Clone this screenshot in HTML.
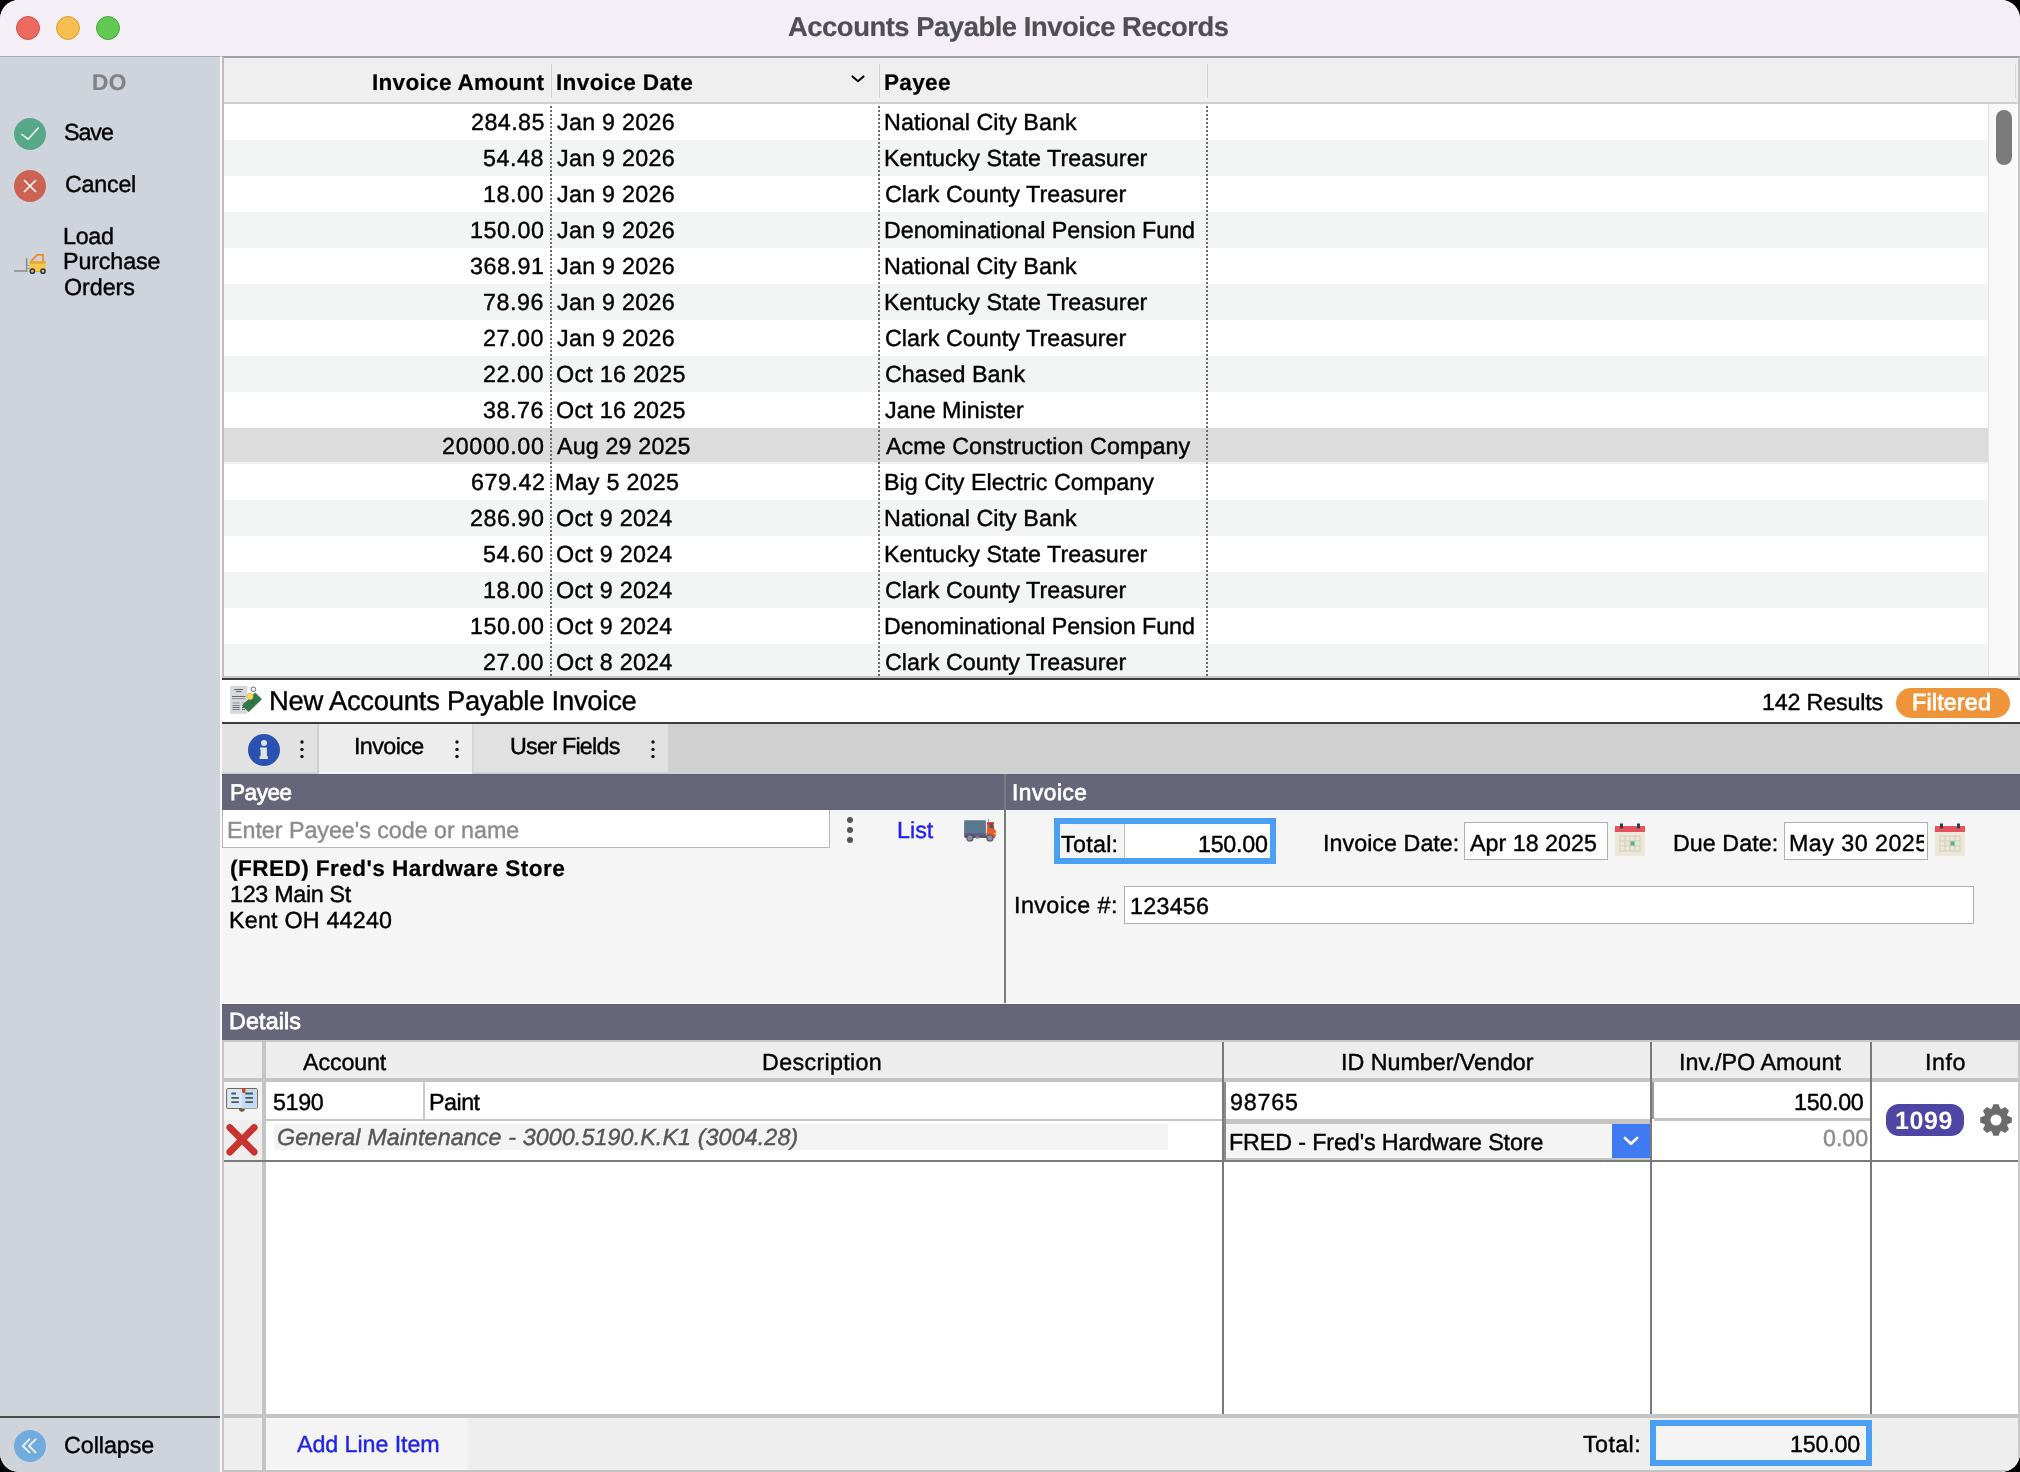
<!DOCTYPE html>
<html><head><meta charset="utf-8">
<style>
*{box-sizing:border-box;margin:0;padding:0}
html,body{width:2020px;height:1472px;overflow:hidden;background:#000}
body{position:relative;font-family:"Liberation Sans",sans-serif;font-size:22px;color:#000;letter-spacing:0.5px}
.a{position:absolute}
.t{position:absolute;white-space:pre;text-rendering:geometricPrecision;will-change:transform;-webkit-text-stroke:0.4px}
.r{text-align:right}
.c{text-align:center}
.b{font-weight:bold}
.n{letter-spacing:1px}
.d{letter-spacing:0.8px}
#win{position:absolute;left:0;top:0;width:2020px;height:1472px;border-radius:19px;overflow:hidden;background:#f5f5f5}
.dotv{position:absolute;width:2px;background-image:linear-gradient(to bottom,#6a6a6a 50%,transparent 50%);background-size:2px 4px}
.sect{position:absolute;height:37px;background:#676579;border-top:1px solid #5e5c70}
.sect .t{color:#fff;font-weight:bold;letter-spacing:0}
.kb{position:absolute;width:4px;height:4px;border-radius:50%;background:#222}
</style></head><body>
<div id="win">
<!-- title bar -->
<div class="a" style="left:0;top:0;width:2020px;height:56px;background:#f4eff6"></div>
<div class="a" style="left:0;top:56px;width:220px;height:1px;background:#a5abb5"></div><div class="a" style="left:222px;top:56px;width:1798px;height:2px;background:#a0a0a0"></div><div class="a" style="left:220px;top:56px;width:2px;height:1px;background:#d8d8d8"></div>
<div class="a" style="left:16px;top:16px;width:24px;height:24px;border-radius:50%;background:#ed6a5e;border:1px solid #d4514a"></div>
<div class="a" style="left:56px;top:16px;width:24px;height:24px;border-radius:50%;background:#f4be50;border:1px solid #d9a03a"></div>
<div class="a" style="left:96px;top:16px;width:24px;height:24px;border-radius:50%;background:#62c854;border:1px solid #48a63c"></div>

<!-- sidebar -->
<div class="a" style="left:0;top:57px;width:220px;height:1415px;background:#cfd3dc"></div>
<div class="a" style="left:220px;top:57px;width:2px;height:1415px;background:#f7f7f7"></div>
<svg class="a" style="left:14px;top:118px" width="32" height="32" viewBox="0 0 32 32"><circle cx="16" cy="16" r="16" fill="#57a888"/><path d="M7.3 16 L14.1 21.2 L24.7 9.4" fill="none" stroke="#fff" stroke-width="1.5"/></svg>
<svg class="a" style="left:14px;top:170px" width="32" height="32" viewBox="0 0 32 32"><circle cx="16" cy="16" r="16" fill="#cc6352"/><path d="M10 10 L22 22 M22 10 L10 22" fill="none" stroke="#fff" stroke-width="1.6"/></svg>
<svg class="a" style="left:10px;top:248px" width="40" height="30" viewBox="0 0 40 30"><rect x="4" y="22.2" width="13" height="1.6" fill="#8f8c85"/><rect x="15.9" y="10.2" width="1.6" height="13.6" fill="#8f8c85"/><rect x="17.5" y="17.1" width="2.5" height="0.9" fill="#9a978f"/><rect x="17.5" y="20" width="2.5" height="0.9" fill="#9a978f"/><rect x="19.6" y="13.2" width="16" height="10.4" fill="#f5c848"/><rect x="19.6" y="13.2" width="16" height="2.6" fill="#eba33a"/><rect x="19.6" y="23" width="16" height="0.9" fill="#f0a030"/><path d="M21 13.2 L27.3 6.9 L33 6.9 L33 13.2" fill="none" stroke="#ec8a2c" stroke-width="1.8"/><circle cx="22.4" cy="23.2" r="2.1" fill="#f5b93a" stroke="#1f3a5f" stroke-width="1.5"/><circle cx="33" cy="23.2" r="2.1" fill="#f5b93a" stroke="#1f3a5f" stroke-width="1.5"/></svg>
<div class="a" style="left:0;top:1416px;width:220px;height:2px;background:#4a4a4a"></div>
<svg class="a" style="left:14px;top:1430px" width="32" height="32" viewBox="0 0 32 32"><circle cx="16" cy="16" r="16" fill="#6fabdd"/><path d="M15.9 8.8 L8.8 15.9 L15.9 23 M22.1 8.8 L15 15.9 L22.1 23" fill="none" stroke="#fff" stroke-width="1.7"/></svg>

<!-- list table -->
<div class="a" style="left:222px;top:57px;width:2px;height:621px;background:#bdbdbd"></div>
<div class="a" style="left:224px;top:58px;width:1794px;height:44px;background:#efefef"></div>
<div class="a" style="left:224px;top:102px;width:1796px;height:2px;background:#cfcfcf"></div>
<div class="a" style="left:2018px;top:57px;width:2px;height:621px;background:#c4c4c4"></div>
<div class="a" style="left:551px;top:64px;width:1px;height:34px;background:#cfcfcf"></div>
<div class="a" style="left:879px;top:64px;width:1px;height:34px;background:#cfcfcf"></div>
<div class="a" style="left:1207px;top:64px;width:1px;height:34px;background:#cfcfcf"></div>
<div class="a" style="left:2015px;top:64px;width:1px;height:34px;background:#d6d6d6"></div>
<svg class="a" style="left:851px;top:74px" width="14" height="10" viewBox="0 0 14 10"><path d="M1.5 2.4 L7 7.2 L12.5 2.4" fill="none" stroke="#000" stroke-width="2" stroke-linecap="round" stroke-linejoin="round"/></svg>
<div class="a" style="left:224px;top:104px;width:1764px;height:36px;background:#ffffff"></div>
<div class="a" style="left:224px;top:140px;width:1764px;height:36px;background:#f3f4f4"></div>
<div class="a" style="left:224px;top:176px;width:1764px;height:36px;background:#ffffff"></div>
<div class="a" style="left:224px;top:212px;width:1764px;height:36px;background:#f3f4f4"></div>
<div class="a" style="left:224px;top:248px;width:1764px;height:36px;background:#ffffff"></div>
<div class="a" style="left:224px;top:284px;width:1764px;height:36px;background:#f3f4f4"></div>
<div class="a" style="left:224px;top:320px;width:1764px;height:36px;background:#ffffff"></div>
<div class="a" style="left:224px;top:356px;width:1764px;height:36px;background:#f3f4f4"></div>
<div class="a" style="left:224px;top:392px;width:1764px;height:36px;background:#ffffff"></div>
<div class="a" style="left:224px;top:428px;width:1764px;height:34px;background:#dcdcdc"></div><div class="a" style="left:224px;top:462px;width:1764px;height:2px;background:#f0f0f0"></div>
<div class="a" style="left:224px;top:464px;width:1764px;height:36px;background:#ffffff"></div>
<div class="a" style="left:224px;top:500px;width:1764px;height:36px;background:#f3f4f4"></div>
<div class="a" style="left:224px;top:536px;width:1764px;height:36px;background:#ffffff"></div>
<div class="a" style="left:224px;top:572px;width:1764px;height:36px;background:#f3f4f4"></div>
<div class="a" style="left:224px;top:608px;width:1764px;height:36px;background:#ffffff"></div>
<div class="a" style="left:224px;top:644px;width:1764px;height:32px;background:#f3f4f4"></div>
<div class="dotv" style="left:550px;top:106px;height:570px"></div>
<div class="dotv" style="left:878px;top:106px;height:570px"></div>
<div class="dotv" style="left:1206px;top:106px;height:570px"></div>
<div class="a" style="left:1988px;top:104px;width:30px;height:572px;background:#f9f9f9;border-left:1px solid #e2e2e2"></div>
<div class="a" style="left:1996px;top:110px;width:16px;height:55px;border-radius:8px;background:#7b7b7b"></div>
<div class="a" style="left:224px;top:676px;width:1796px;height:2px;background:#c8c8c8"></div>
<div class="a" style="left:222px;top:678px;width:1798px;height:2px;background:#3c3c3c"></div>

<!-- new invoice bar -->
<div class="a" style="left:222px;top:680px;width:1798px;height:42px;background:#fff"></div>
<svg class="a" style="left:226px;top:682px" width="40" height="36" viewBox="0 0 40 36"><rect x="4.2" y="3.9" width="17.1" height="27.9" fill="#d6d7d8"/><g fill="#555b66"><rect x="8.3" y="7" width="8.6" height="1"/><rect x="10.2" y="9.1" width="5.3" height="0.9"/><rect x="6" y="14" width="13.4" height="0.9"/><rect x="6" y="16.2" width="13.4" height="0.9" opacity="0.6"/><rect x="6.5" y="20.5" width="7.2" height="0.9" opacity="0.6"/><rect x="6.5" y="23" width="7.2" height="0.9" opacity="0.8"/><rect x="6.5" y="25" width="7.2" height="0.9"/><rect x="6.5" y="27.1" width="7.2" height="0.9" opacity="0.8"/><rect x="16" y="20.5" width="3" height="0.9" opacity="0.6"/><rect x="16" y="25" width="3" height="0.9"/><rect x="16" y="27.1" width="3" height="0.9"/></g><path d="M16.3 23.5 L29.3 10.9 L35.6 17.2 L22.6 29.8 Z" fill="#2f7a47" stroke="#1f5f35" stroke-width="0.6"/><ellipse cx="26.3" cy="20.6" rx="1.3" ry="1.8" fill="#276a3c" transform="rotate(-40 26.3 20.6)"/><circle cx="24" cy="14.4" r="3.1" fill="#f6dd5c" stroke="#efad4a" stroke-width="0.7"/><circle cx="27.4" cy="7.3" r="2.3" fill="none" stroke="#555b66" stroke-width="0.9"/></svg>
<div class="a" style="left:1896px;top:688px;width:114px;height:30px;border-radius:15px;background:#f0943a"></div>
<div class="a" style="left:222px;top:722px;width:1798px;height:2px;background:#3c3c3c"></div>

<!-- tabs -->
<div class="a" style="left:222px;top:724px;width:1798px;height:50px;background:#d0d0d0"></div>
<div class="a" style="left:668px;top:773px;width:1352px;height:1px;background:#d7d7d6"></div>
<div class="a" style="left:222px;top:724px;width:95px;height:48px;background:#e2e2e2"></div>
<div class="a" style="left:222px;top:772px;width:95px;height:2px;background:#d4d4d4"></div>
<div class="a" style="left:317px;top:724px;width:2px;height:50px;background:#cdcdcd"></div>
<div class="a" style="left:319px;top:724px;width:153px;height:48px;background:#ededed"></div>
<div class="a" style="left:319px;top:772px;width:153px;height:2px;background:#f4f4f4"></div>
<div class="a" style="left:472px;top:724px;width:2px;height:48px;background:#d5d5d5"></div>
<div class="a" style="left:474px;top:724px;width:194px;height:48px;background:#e1e1e1"></div>
<svg class="a" style="left:248px;top:734px" width="32" height="32" viewBox="0 0 32 32"><circle cx="16" cy="16" r="16" fill="#2a53b1"/><circle cx="16" cy="9" r="3" fill="#e2e2e2"/><path d="M12 13.6 H18.9 V22.2 H19.9 V24.9 H11.6 V22.2 H12.6 V15.6 H12 Z" fill="#e2e2e2"/></svg>
<svg class="a" style="left:298px;top:736px" width="8" height="26" viewBox="0 0 8 26"><circle cx="4" cy="6" r="1.7" fill="#111"/><circle cx="4" cy="13.4" r="1.7" fill="#111"/><circle cx="4" cy="20.5" r="1.7" fill="#111"/></svg>
<svg class="a" style="left:453px;top:736px" width="8" height="26" viewBox="0 0 8 26"><circle cx="4" cy="6" r="1.7" fill="#111"/><circle cx="4" cy="13.4" r="1.7" fill="#111"/><circle cx="4" cy="20.5" r="1.7" fill="#111"/></svg>
<svg class="a" style="left:649px;top:736px" width="8" height="26" viewBox="0 0 8 26"><circle cx="4" cy="6" r="1.7" fill="#111"/><circle cx="4" cy="13.4" r="1.7" fill="#111"/><circle cx="4" cy="20.5" r="1.7" fill="#111"/></svg>

<!-- section headers -->
<div class="sect" style="left:222px;top:774px;width:782px;height:36px"></div>
<div class="sect" style="left:1006px;top:774px;width:1014px;height:36px"></div>
<div class="a" style="left:1004px;top:774px;width:2px;height:230px;background:#7a7a7a"></div>
<div class="a" style="left:222px;top:1003px;width:1798px;height:1px;background:#fff"></div>

<!-- payee panel -->
<div class="a" style="left:222px;top:810px;width:608px;height:38px;background:#fff;border:1px solid #b8b8b8;border-top:none"></div>
<div class="a" style="left:847px;top:817px;width:6px;height:6px;border-radius:50%;background:#555"></div>
<div class="a" style="left:847px;top:827px;width:6px;height:6px;border-radius:50%;background:#555"></div>
<div class="a" style="left:847px;top:837px;width:6px;height:6px;border-radius:50%;background:#555"></div>
<svg class="a" style="left:958px;top:812px" width="44" height="36" viewBox="0 0 44 36"><rect x="6.1" y="8.3" width="21.8" height="14" rx="1" fill="#5b788e"/><rect x="6.1" y="21.2" width="22.5" height="4.2" fill="#5e6080"/><rect x="7" y="24.3" width="30" height="1.5" fill="#4e4a60"/><path d="M28.9 10.3 H35.5 L36.2 16.8 L37.9 18.8 V24.4 H28.9 Z" fill="#ee5c2a"/><rect x="28.9" y="10.3" width="7" height="1.8" fill="#d3322c"/><path d="M31.3 12.1 H35 L35.9 16.8 L31.3 15.8 Z" fill="#545470"/><rect x="30" y="7" width="1" height="3.3" fill="#9aa0a8"/><circle cx="36.8" cy="21.6" r="0.9" fill="#f7d44a"/><rect x="17.4" y="24.6" width="4.2" height="2.2" rx="1" fill="#8e8c9a"/><circle cx="12" cy="25.9" r="3.1" fill="#908da0" stroke="#4e4a60" stroke-width="1.1"/><circle cx="32" cy="25.9" r="3.1" fill="#908da0" stroke="#4e4a60" stroke-width="1.1"/></svg>

<!-- invoice panel -->
<div class="a" style="left:1054px;top:818px;width:222px;height:46px;border:6px solid #4aa0f5;background:#f5f5f5"></div>
<div class="a" style="left:1124px;top:824px;width:146px;height:34px;background:#fff;border-left:1px solid #bdbdbd"></div>
<div class="a" style="left:1464px;top:822px;width:144px;height:38px;background:#fff;border:1px solid #b0b0b0"></div>
<div class="a" style="left:1784px;top:822px;width:144px;height:38px;background:#fff;border:1px solid #b0b0b0;overflow:hidden"></div>
<svg class="a cal" style="left:1614px;top:823px" width="32" height="34" viewBox="0 0 32 34"><rect x="1" y="3" width="30" height="30" fill="#ebe8d9"/><rect x="1" y="3" width="30" height="6" fill="#e5525b"/><rect x="6" y="0.5" width="3" height="5" fill="#2e3e52"/><rect x="23" y="0.5" width="3" height="5" fill="#2e3e52"/><g fill="none" stroke="#d2cdb5" stroke-width="1"><rect x="6" y="13" width="20" height="15"/><path d="M11 13 V28 M16 13 V28 M21 13 V28 M6 18 H26 M6 23 H26"/></g><rect x="16.5" y="18.5" width="4" height="4" fill="#4fb39a"/></svg>
<svg class="a cal" style="left:1934px;top:823px" width="32" height="34" viewBox="0 0 32 34"><rect x="1" y="3" width="30" height="30" fill="#ebe8d9"/><rect x="1" y="3" width="30" height="6" fill="#e5525b"/><rect x="6" y="0.5" width="3" height="5" fill="#2e3e52"/><rect x="23" y="0.5" width="3" height="5" fill="#2e3e52"/><g fill="none" stroke="#d2cdb5" stroke-width="1"><rect x="6" y="13" width="20" height="15"/><path d="M11 13 V28 M16 13 V28 M21 13 V28 M6 18 H26 M6 23 H26"/></g><rect x="16.5" y="18.5" width="4" height="4" fill="#4fb39a"/></svg>
<div class="a" style="left:1124px;top:886px;width:850px;height:38px;background:#fff;border:1px solid #b0b0b0"></div>

<!-- details -->
<div class="sect" style="left:222px;top:1004px;width:1798px;height:36px"></div>
<div class="a" style="left:222px;top:1040px;width:1798px;height:432px;background:#fff"></div>
<div class="a" style="left:222px;top:1040px;width:2px;height:432px;background:#c4c4c4"></div>
<div class="a" style="left:224px;top:1040px;width:1796px;height:2px;background:#c8c8c8"></div>
<div class="a" style="left:224px;top:1042px;width:1794px;height:36px;background:#ededed"></div>
<div class="a" style="left:224px;top:1078px;width:1794px;height:4px;background:#c4c4c4"></div>
<div class="a" style="left:224px;top:1082px;width:38px;height:390px;background:#eeeeee"></div>
<div class="a" style="left:224px;top:1082px;width:38px;height:38px;background:#f4f4f4"></div>
<div class="a" style="left:262px;top:1040px;width:4px;height:432px;background:#c4c4c4"></div>
<div class="a" style="left:2018px;top:1040px;width:2px;height:432px;background:#c8c8c8"></div>
<!-- row 1 -->
<div class="a" style="left:423px;top:1082px;width:2px;height:37px;background:#c8c8c8"></div>
<div class="a" style="left:266px;top:1119px;width:956px;height:2px;background:#c4c4c4"></div>
<div class="a" style="left:274px;top:1124px;width:894px;height:26px;background:#f3f3f3"></div>
<div class="a" style="left:224px;top:1160px;width:1794px;height:2px;background:#7a7a7a"></div>
<!-- ID col -->
<div class="a" style="left:1224px;top:1082px;width:2px;height:78px;background:#8c8c8c"></div>
<div class="a" style="left:1226px;top:1119px;width:424px;height:5px;background:#c4c4c4"></div>
<div class="a" style="left:1226px;top:1124px;width:386px;height:34px;background:#f4f4f4"></div>
<div class="a" style="left:1226px;top:1158px;width:424px;height:2px;background:#c4c4c4"></div>
<div class="a" style="left:1612px;top:1124px;width:38px;height:34px;background:#3f7af3"></div>
<svg class="a" style="left:1622px;top:1133px" width="18" height="14" viewBox="0 0 18 14"><path d="M2.9 5 L9 10.8 L15.1 5" fill="none" stroke="#fff" stroke-width="2.6" stroke-linecap="round" stroke-linejoin="round"/></svg>
<!-- amount col -->
<div class="a" style="left:1652px;top:1082px;width:2px;height:37px;background:#9a9a9a"></div>
<div class="a" style="left:1654px;top:1118px;width:216px;height:3px;background:#c4c4c4"></div>
<!-- info col -->
<div class="a" style="left:1886px;top:1104px;width:78px;height:32px;border-radius:13px;background:#4e45a5"></div>
<svg class="a" style="left:1979px;top:1103px" width="34" height="34" viewBox="0 0 34 34"><path fill="#6b6b6b" fill-rule="evenodd" d="M12.80 5.55 L14.40 1.21 L19.60 1.21 L21.20 5.55 A12.2 12.2 0 0 1 22.13 5.93 L26.32 4.00 L30.00 7.68 L28.07 11.87 A12.2 12.2 0 0 1 28.45 12.80 L32.79 14.40 L32.79 19.60 L28.45 21.20 A12.2 12.2 0 0 1 28.07 22.13 L30.00 26.32 L26.32 30.00 L22.13 28.07 A12.2 12.2 0 0 1 21.20 28.45 L19.60 32.79 L14.40 32.79 L12.80 28.45 A12.2 12.2 0 0 1 11.87 28.07 L7.68 30.00 L4.00 26.32 L5.93 22.13 A12.2 12.2 0 0 1 5.55 21.20 L1.21 19.60 L1.21 14.40 L5.55 12.80 A12.2 12.2 0 0 1 5.93 11.87 L4.00 7.68 L7.68 4.00 L11.87 5.93 A12.2 12.2 0 0 1 12.80 5.55 Z M17 11.5 A5.5 5.5 0 1 0 17 22.5 A5.5 5.5 0 1 0 17 11.5 Z"/></svg>
<!-- column dividers -->
<div class="a" style="left:1222px;top:1042px;width:2px;height:430px;background:#7a7a7a"></div>
<div class="a" style="left:1650px;top:1042px;width:2px;height:430px;background:#7a7a7a"></div>
<div class="a" style="left:1870px;top:1042px;width:2px;height:430px;background:#7a7a7a"></div>
<!-- row icons -->
<svg class="a" style="left:222px;top:1082px" width="44" height="80" viewBox="0 0 44 80"><circle cx="19.9" cy="26.6" r="3.1" fill="#6f5b42"/><rect x="4.6" y="6.5" width="30.8" height="20" rx="1.2" fill="#d4e6f7" stroke="#7a6548" stroke-width="1"/><rect x="20" y="7" width="15" height="19.5" fill="#c2dcf3"/><g stroke="#50545a" stroke-width="1.8" stroke-linecap="round"><path d="M10 11.5 H13.3 M10 15.9 H16.2 M10 20.1 H16.2 M24 11.5 H30.3 M24 15.9 H30.3 M24 20.1 H30.3"/></g><path d="M20.1 6.2 H23.4 V10.2 L21.75 11.2 L20.1 10.2 Z" fill="#d33f1f"/><path d="M7.8 45.5 L32.2 70 M32.2 45.5 L7.8 70" stroke="#c8322f" stroke-width="6.8" stroke-linecap="round"/></svg>

<!-- footer -->
<div class="a" style="left:224px;top:1414px;width:1794px;height:4px;background:#c4c4c4"></div>
<div class="a" style="left:266px;top:1418px;width:1752px;height:52px;background:#eeeeee"></div>
<div class="a" style="left:266px;top:1418px;width:202px;height:52px;background:#f4f4f4"></div>
<div class="a" style="left:222px;top:1470px;width:1798px;height:2px;background:#c4c4c4"></div>
<div class="a" style="left:1650px;top:1420px;width:222px;height:46px;border:6px solid #4aa0f5;background:#f4f4f4"></div>
<div class="t" id="title" style="left:788.05px;top:12.71px;font-size:27.4px;line-height:27.4px;letter-spacing:-0.459px;font-weight:bold;-webkit-text-stroke:0.2px;color:#4f4f53;">Accounts Payable Invoice Records</div>
<div class="t" id="do" style="left:91.96px;top:71.87px;font-size:22.6px;line-height:22.6px;letter-spacing:0.552px;font-weight:bold;-webkit-text-stroke:0.2px;color:#828282;">DO</div>
<div class="t" id="save" style="left:63.60px;top:121.28px;font-size:23.3px;line-height:23.3px;letter-spacing:-1.068px;color:#000;">Save</div>
<div class="t" id="cancel" style="left:64.50px;top:173.18px;font-size:23.3px;line-height:23.3px;letter-spacing:-0.250px;color:#000;">Cancel</div>
<div class="t" id="load" style="left:63.45px;top:224.98px;font-size:23.3px;line-height:23.3px;letter-spacing:-0.313px;color:#000;">Load</div>
<div class="t" id="purch" style="left:63.45px;top:249.68px;font-size:23.3px;line-height:23.3px;letter-spacing:-0.143px;color:#000;">Purchase</div>
<div class="t" id="orders" style="left:64.01px;top:276.28px;font-size:23.3px;line-height:23.3px;letter-spacing:-0.052px;color:#000;">Orders</div>
<div class="t" id="collapse" style="left:63.50px;top:1433.78px;font-size:23.3px;line-height:23.3px;letter-spacing:-0.048px;color:#000;">Collapse</div>
<div class="t" id="h_amt" style="left:371.96px;top:71.67px;font-size:22.6px;line-height:22.6px;letter-spacing:0.271px;font-weight:bold;-webkit-text-stroke:0.2px;color:#000;">Invoice Amount</div>
<div class="t" id="h_date" style="left:556.11px;top:71.67px;font-size:22.6px;line-height:22.6px;letter-spacing:0.332px;font-weight:bold;-webkit-text-stroke:0.2px;color:#000;">Invoice Date</div>
<div class="t" id="h_payee" style="left:883.96px;top:71.87px;font-size:22.6px;line-height:22.6px;letter-spacing:0.280px;font-weight:bold;-webkit-text-stroke:0.2px;color:#000;">Payee</div>
<div class="t" id="ra0" style="left:470.72px;top:111.28px;font-size:23.3px;line-height:23.3px;letter-spacing:0.443px;color:#000;">284.85</div>
<div class="t" id="rd0" style="left:556.84px;top:111.28px;font-size:23.3px;line-height:23.3px;letter-spacing:0.263px;color:#000;">Jan 9 2026</div>
<div class="t" id="rp0" style="left:884.01px;top:111.28px;font-size:23.3px;line-height:23.3px;letter-spacing:0.059px;color:#000;">National City Bank</div>
<div class="t" id="ra1" style="left:483.27px;top:147.28px;font-size:23.3px;line-height:23.3px;letter-spacing:0.558px;color:#000;">54.48</div>
<div class="t" id="rd1" style="left:556.84px;top:147.28px;font-size:23.3px;line-height:23.3px;letter-spacing:0.271px;color:#000;">Jan 9 2026</div>
<div class="t" id="rp1" style="left:884.01px;top:147.28px;font-size:23.3px;line-height:23.3px;letter-spacing:0.022px;color:#000;">Kentucky State Treasurer</div>
<div class="t" id="ra2" style="left:483.17px;top:183.28px;font-size:23.3px;line-height:23.3px;letter-spacing:0.558px;color:#000;">18.00</div>
<div class="t" id="rd2" style="left:556.84px;top:183.28px;font-size:23.3px;line-height:23.3px;letter-spacing:0.271px;color:#000;">Jan 9 2026</div>
<div class="t" id="rp2" style="left:884.76px;top:183.28px;font-size:23.3px;line-height:23.3px;letter-spacing:0.022px;color:#000;">Clark County Treasurer</div>
<div class="t" id="ra3" style="left:470.37px;top:219.28px;font-size:23.3px;line-height:23.3px;letter-spacing:0.558px;color:#000;">150.00</div>
<div class="t" id="rd3" style="left:556.84px;top:219.28px;font-size:23.3px;line-height:23.3px;letter-spacing:0.271px;color:#000;">Jan 9 2026</div>
<div class="t" id="rp3" style="left:884.01px;top:219.28px;font-size:23.3px;line-height:23.3px;letter-spacing:-0.041px;color:#000;">Denominational Pension Fund</div>
<div class="t" id="ra4" style="left:470.31px;top:255.28px;font-size:23.3px;line-height:23.3px;letter-spacing:0.558px;color:#000;">368.91</div>
<div class="t" id="rd4" style="left:556.84px;top:255.28px;font-size:23.3px;line-height:23.3px;letter-spacing:0.271px;color:#000;">Jan 9 2026</div>
<div class="t" id="rp4" style="left:884.01px;top:255.28px;font-size:23.3px;line-height:23.3px;letter-spacing:0.054px;color:#000;">National City Bank</div>
<div class="t" id="ra5" style="left:483.27px;top:291.28px;font-size:23.3px;line-height:23.3px;letter-spacing:0.558px;color:#000;">78.96</div>
<div class="t" id="rd5" style="left:556.84px;top:291.28px;font-size:23.3px;line-height:23.3px;letter-spacing:0.271px;color:#000;">Jan 9 2026</div>
<div class="t" id="rp5" style="left:884.01px;top:291.28px;font-size:23.3px;line-height:23.3px;letter-spacing:0.022px;color:#000;">Kentucky State Treasurer</div>
<div class="t" id="ra6" style="left:483.17px;top:327.28px;font-size:23.3px;line-height:23.3px;letter-spacing:0.558px;color:#000;">27.00</div>
<div class="t" id="rd6" style="left:556.84px;top:327.28px;font-size:23.3px;line-height:23.3px;letter-spacing:0.271px;color:#000;">Jan 9 2026</div>
<div class="t" id="rp6" style="left:884.76px;top:327.28px;font-size:23.3px;line-height:23.3px;letter-spacing:0.022px;color:#000;">Clark County Treasurer</div>
<div class="t" id="ra7" style="left:483.17px;top:363.28px;font-size:23.3px;line-height:23.3px;letter-spacing:0.558px;color:#000;">22.00</div>
<div class="t" id="rd7" style="left:556.01px;top:363.28px;font-size:23.3px;line-height:23.3px;letter-spacing:0.254px;color:#000;">Oct 16 2025</div>
<div class="t" id="rp7" style="left:884.76px;top:363.28px;font-size:23.3px;line-height:23.3px;letter-spacing:0.022px;color:#000;">Chased Bank</div>
<div class="t" id="ra8" style="left:483.27px;top:399.28px;font-size:23.3px;line-height:23.3px;letter-spacing:0.558px;color:#000;">38.76</div>
<div class="t" id="rd8" style="left:556.01px;top:399.28px;font-size:23.3px;line-height:23.3px;letter-spacing:0.254px;color:#000;">Oct 16 2025</div>
<div class="t" id="rp8" style="left:885.40px;top:399.28px;font-size:23.3px;line-height:23.3px;letter-spacing:0.022px;color:#000;">Jane Minister</div>
<div class="t" id="ra9" style="left:442.02px;top:435.28px;font-size:23.3px;line-height:23.3px;letter-spacing:0.673px;color:#000;">20000.00</div>
<div class="t" id="rd9" style="left:557.11px;top:435.28px;font-size:23.3px;line-height:23.3px;letter-spacing:0.143px;color:#000;">Aug 29 2025</div>
<div class="t" id="rp9" style="left:885.67px;top:435.28px;font-size:23.3px;line-height:23.3px;letter-spacing:0.046px;color:#000;">Acme Construction Company</div>
<div class="t" id="ra10" style="left:470.66px;top:471.28px;font-size:23.3px;line-height:23.3px;letter-spacing:0.558px;color:#000;">679.42</div>
<div class="t" id="rd10" style="left:555.45px;top:471.28px;font-size:23.3px;line-height:23.3px;letter-spacing:0.254px;color:#000;">May 5 2025</div>
<div class="t" id="rp10" style="left:884.01px;top:471.28px;font-size:23.3px;line-height:23.3px;letter-spacing:0.022px;color:#000;">Big City Electric Company</div>
<div class="t" id="ra11" style="left:470.37px;top:507.28px;font-size:23.3px;line-height:23.3px;letter-spacing:0.558px;color:#000;">286.90</div>
<div class="t" id="rd11" style="left:556.01px;top:507.28px;font-size:23.3px;line-height:23.3px;letter-spacing:0.254px;color:#000;">Oct 9 2024</div>
<div class="t" id="rp11" style="left:884.01px;top:507.28px;font-size:23.3px;line-height:23.3px;letter-spacing:0.054px;color:#000;">National City Bank</div>
<div class="t" id="ra12" style="left:483.17px;top:543.28px;font-size:23.3px;line-height:23.3px;letter-spacing:0.558px;color:#000;">54.60</div>
<div class="t" id="rd12" style="left:556.01px;top:543.28px;font-size:23.3px;line-height:23.3px;letter-spacing:0.254px;color:#000;">Oct 9 2024</div>
<div class="t" id="rp12" style="left:884.01px;top:543.28px;font-size:23.3px;line-height:23.3px;letter-spacing:0.022px;color:#000;">Kentucky State Treasurer</div>
<div class="t" id="ra13" style="left:483.17px;top:579.28px;font-size:23.3px;line-height:23.3px;letter-spacing:0.558px;color:#000;">18.00</div>
<div class="t" id="rd13" style="left:556.01px;top:579.28px;font-size:23.3px;line-height:23.3px;letter-spacing:0.254px;color:#000;">Oct 9 2024</div>
<div class="t" id="rp13" style="left:884.76px;top:579.28px;font-size:23.3px;line-height:23.3px;letter-spacing:0.022px;color:#000;">Clark County Treasurer</div>
<div class="t" id="ra14" style="left:470.37px;top:615.28px;font-size:23.3px;line-height:23.3px;letter-spacing:0.558px;color:#000;">150.00</div>
<div class="t" id="rd14" style="left:556.01px;top:615.28px;font-size:23.3px;line-height:23.3px;letter-spacing:0.254px;color:#000;">Oct 9 2024</div>
<div class="t" id="rp14" style="left:884.01px;top:615.28px;font-size:23.3px;line-height:23.3px;letter-spacing:-0.044px;color:#000;">Denominational Pension Fund</div>
<div class="t" id="ra15" style="left:483.17px;top:651.28px;font-size:23.3px;line-height:23.3px;letter-spacing:0.558px;color:#000;">27.00</div>
<div class="t" id="rd15" style="left:556.01px;top:651.28px;font-size:23.3px;line-height:23.3px;letter-spacing:0.254px;color:#000;">Oct 8 2024</div>
<div class="t" id="rp15" style="left:884.76px;top:651.28px;font-size:23.3px;line-height:23.3px;letter-spacing:0.022px;color:#000;">Clark County Treasurer</div>
<div class="t" id="newinv" style="left:268.65px;top:686.76px;font-size:27.4px;line-height:27.4px;letter-spacing:-0.248px;color:#000;">New Accounts Payable Invoice</div>
<div class="t" id="results" style="left:1761.61px;top:691.18px;font-size:23.3px;line-height:23.3px;letter-spacing:-0.192px;color:#000;">142 Results</div>
<div class="t" id="filtered" style="left:1911.60px;top:691.18px;font-size:23.3px;line-height:23.3px;letter-spacing:0.182px;font-weight:normal;-webkit-text-stroke:0.75px;color:#fff;">Filtered</div>
<div class="t" id="tab_inv" style="left:354.36px;top:735.28px;font-size:23.3px;line-height:23.3px;letter-spacing:-0.599px;color:#000;">Invoice</div>
<div class="t" id="tab_uf" style="left:509.61px;top:735.28px;font-size:23.3px;line-height:23.3px;letter-spacing:-0.749px;color:#000;">User Fields</div>
<div class="t" id="s_payee" style="left:229.92px;top:781.57px;font-size:22.6px;line-height:22.6px;letter-spacing:-0.492px;font-weight:normal;-webkit-text-stroke:0.75px;color:#fff;">Payee</div>
<div class="t" id="s_inv" style="left:1012.14px;top:781.57px;font-size:22.6px;line-height:22.6px;letter-spacing:0.554px;font-weight:normal;-webkit-text-stroke:0.75px;color:#fff;">Invoice</div>
<div class="t" id="s_det" style="left:229.45px;top:1009.98px;font-size:23.3px;line-height:23.3px;letter-spacing:0.131px;font-weight:normal;-webkit-text-stroke:0.75px;color:#fff;">Details</div>
<div class="t" id="ph" style="left:227.45px;top:818.88px;font-size:23.3px;line-height:23.3px;letter-spacing:-0.040px;color:#8c8c8c;">Enter Payee's code or name</div>
<div class="t" id="list" style="left:897.45px;top:819.28px;font-size:23.3px;line-height:23.3px;letter-spacing:0.025px;color:#1f1ff0;">List</div>
<div class="t" id="fred" style="left:230.35px;top:857.67px;font-size:22.6px;line-height:22.6px;letter-spacing:0.433px;font-weight:bold;-webkit-text-stroke:0.2px;color:#000;">(FRED) Fred's Hardware Store</div>
<div class="t" id="addr1" style="left:229.91px;top:883.18px;font-size:23.3px;line-height:23.3px;letter-spacing:-0.299px;color:#000;">123 Main St</div>
<div class="t" id="addr2" style="left:229.45px;top:908.98px;font-size:23.3px;line-height:23.3px;letter-spacing:0.204px;color:#000;">Kent OH 44240</div>
<div class="t" id="tot_l" style="left:1060.96px;top:832.98px;font-size:23.3px;line-height:23.3px;letter-spacing:0.275px;color:#000;">Total:</div>
<div class="t" id="tot_v" style="left:1197.91px;top:832.98px;font-size:23.3px;line-height:23.3px;letter-spacing:-0.280px;color:#000;">150.00</div>
<div class="t" id="invdate_l" style="left:1323.21px;top:832.48px;font-size:23.3px;line-height:23.3px;letter-spacing:0.030px;color:#000;">Invoice Date:</div>
<div class="t" id="invdate_v" style="left:1470.41px;top:832.48px;font-size:23.3px;line-height:23.3px;letter-spacing:-0.007px;color:#000;">Apr 18 2025</div>
<div class="t" id="due_l" style="left:1673.45px;top:831.88px;font-size:23.3px;line-height:23.3px;letter-spacing:0.039px;color:#000;">Due Date:</div>
<div class="t" id="due_v" style="left:1789.45px;top:831.88px;font-size:23.3px;line-height:23.3px;letter-spacing:0.447px;color:#000;clip-path:inset(-10px 0 -10px -10px);width:134.55px;">May 30 2025</div>
<div class="t" id="invno_l" style="left:1014.06px;top:893.78px;font-size:23.3px;line-height:23.3px;letter-spacing:0.409px;color:#000;">Invoice #:</div>
<div class="t" id="invno_v" style="left:1129.91px;top:895.38px;font-size:23.3px;line-height:23.3px;letter-spacing:0.260px;color:#000;">123456</div>
<div class="t" id="c_acct" style="left:303.41px;top:1051.08px;font-size:23.3px;line-height:23.3px;letter-spacing:-0.145px;color:#000;">Account</div>
<div class="t" id="c_desc" style="left:761.75px;top:1051.48px;font-size:23.3px;line-height:23.3px;letter-spacing:0.330px;color:#000;">Description</div>
<div class="t" id="c_id" style="left:1341.21px;top:1051.28px;font-size:23.3px;line-height:23.3px;letter-spacing:-0.030px;color:#000;">ID Number/Vendor</div>
<div class="t" id="c_amt" style="left:1679.06px;top:1050.58px;font-size:23.3px;line-height:23.3px;letter-spacing:0.046px;color:#000;">Inv./PO Amount</div>
<div class="t" id="c_info" style="left:1925.06px;top:1050.58px;font-size:23.3px;line-height:23.3px;letter-spacing:0.527px;color:#000;">Info</div>
<div class="t" id="acct" style="left:272.81px;top:1091.38px;font-size:23.3px;line-height:23.3px;letter-spacing:-0.357px;color:#000;">5190</div>
<div class="t" id="desc" style="left:429.45px;top:1091.38px;font-size:23.3px;line-height:23.3px;letter-spacing:-0.501px;color:#000;">Paint</div>
<div class="t" id="gm" style="left:276.73px;top:1126.48px;font-size:23.3px;line-height:23.3px;letter-spacing:0.099px;font-style:italic;color:#555;">General Maintenance - 3000.5190.K.K1 (3004.28)</div>
<div class="t" id="idno" style="left:1229.70px;top:1091.28px;font-size:23.3px;line-height:23.3px;letter-spacing:0.801px;color:#000;">98765</div>
<div class="t" id="vendor" style="left:1229.45px;top:1131.38px;font-size:23.3px;line-height:23.3px;letter-spacing:-0.124px;color:#000;">FRED - Fred's Hardware Store</div>
<div class="t" id="amt1" style="left:1794.46px;top:1091.28px;font-size:23.3px;line-height:23.3px;letter-spacing:-0.296px;color:#000;">150.00</div>
<div class="t" id="amt2" style="left:1822.58px;top:1127.18px;font-size:23.3px;line-height:23.3px;letter-spacing:-0.043px;color:#8c8c8c;">0.00</div>
<div class="t" id="b1099" style="left:1895.45px;top:1109.44px;font-size:25px;line-height:25px;letter-spacing:0.581px;font-weight:bold;-webkit-text-stroke:0;color:#fff;">1099</div>
<div class="t" id="addline" style="left:296.56px;top:1433.08px;font-size:23.3px;line-height:23.3px;letter-spacing:-0.086px;color:#2323e6;">Add Line Item</div>
<div class="t" id="ftot_l" style="left:1582.96px;top:1433.28px;font-size:23.3px;line-height:23.3px;letter-spacing:0.388px;color:#000;">Total:</div>
<div class="t" id="ftot_v" style="left:1789.76px;top:1433.28px;font-size:23.3px;line-height:23.3px;letter-spacing:-0.232px;color:#000;">150.00</div>
</div>
</body></html>
